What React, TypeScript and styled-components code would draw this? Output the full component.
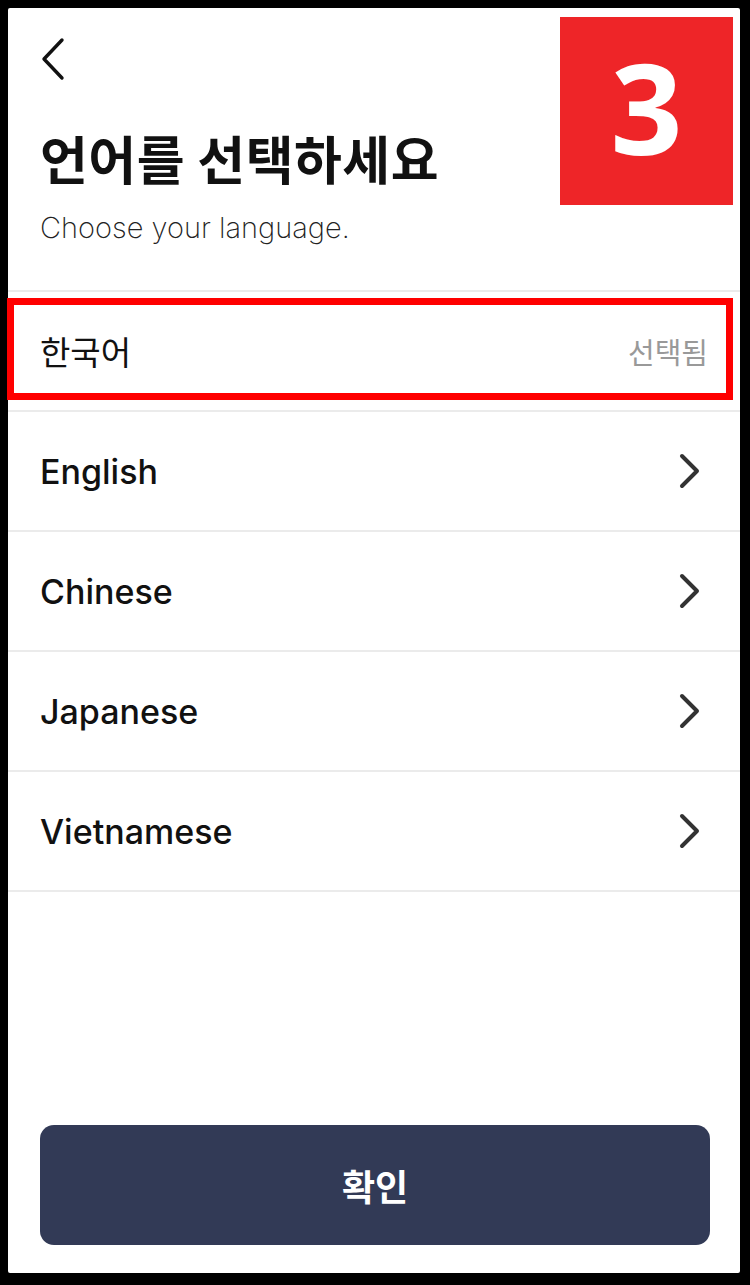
import React from "react";
import styled, { createGlobalStyle } from "styled-components";

const GlobalStyle = createGlobalStyle`
  html, body {
    margin: 0;
    padding: 0;
    background: #000;
  }
  body {
    font-family: "Inter", "Noto Sans CJK KR", sans-serif;
  }
`;

const languages = ["English", "Chinese", "Japanese", "Vietnamese"];

const ChevronLeft = () => (
  <svg width="28" height="44" viewBox="0 0 28 44" fill="none">
    <path
      d="M22 3 L4 22 L22 41"
      stroke="#111"
      strokeWidth="3.4"
      strokeLinecap="round"
      strokeLinejoin="round"
    />
  </svg>
);

const ChevronRight = () => (
  <svg width="24" height="36" viewBox="0 0 24 36" fill="none">
    <path
      d="M4 3 L19 18 L4 33"
      stroke="#333"
      strokeWidth="4"
      strokeLinecap="round"
      strokeLinejoin="round"
    />
  </svg>
);

const App = () => {
  return (
    <>
      <GlobalStyle />
      <Frame>
        <Panel>
          <Badge>3</Badge>
          <Header>
            <BackButton aria-label="back">
              <ChevronLeft />
            </BackButton>
            <Title>언어를 선택하세요</Title>
            <Subtitle>Choose your language.</Subtitle>
          </Header>
          <List>
            <Row>
              <Highlight />
              <Label className="ko">한국어</Label>
              <Selected>선택됨</Selected>
            </Row>
            {languages.map((lang) => (
              <Row key={lang}>
                <Label>{lang}</Label>
                <ChevronRight />
              </Row>
            ))}
          </List>
          <Spacer />
          <Footer>
            <ConfirmButton>확인</ConfirmButton>
          </Footer>
        </Panel>
      </Frame>
    </>
  );
};

export default App;

const Frame = styled.div`
  width: 750px;
  height: 1285px;
  padding: 8px 10px 12px 8px;
  box-sizing: border-box;
  background: #000;
`;

const Panel = styled.div`
  position: relative;
  width: 100%;
  height: 100%;
  background: #fff;
  display: flex;
  flex-direction: column;
  border-radius: 2px;
`;

const Badge = styled.div`
  position: absolute;
  top: 9px;
  left: 552px;
  width: 173px;
  height: 188px;
  background: #ee2528;
  color: #fff;
  font-family: "Open Sans", "Noto Sans", sans-serif;
  font-weight: 700;
  font-size: 126px;
  line-height: 1;
  display: flex;
  justify-content: center;
  padding-top: 26px;
  box-sizing: border-box;
`;

const Header = styled.div`
  height: 282px;
  padding: 28px 32px 0;
  box-sizing: border-box;
`;

const BackButton = styled.button`
  background: none;
  border: none;
  padding: 0;
  margin: 0;
  display: block;
  height: 48px;
  cursor: pointer;
`;

const Title = styled.h1`
  margin: 42px 0 0;
  font-family: "Noto Sans CJK KR", sans-serif;
  font-weight: 700;
  font-size: 52px;
  line-height: 64px;
  letter-spacing: 0.5px;
  color: #111;
`;

const Subtitle = styled.p`
  margin: 20px 0 0;
  font-family: "Inter", sans-serif;
  font-weight: 200;
  font-size: 29px;
  line-height: 36px;
  color: #222;
`;

const List = styled.div`
  display: flex;
  flex-direction: column;
  border-bottom: 2px solid #ebebeb;
`;

const Row = styled.div`
  position: relative;
  height: 118px;
  border-top: 2px solid #ebebeb;
  display: flex;
  align-items: center;
  justify-content: space-between;
  padding: 0 38px 0 32px;
`;

const Highlight = styled.div`
  position: absolute;
  top: 6px;
  left: -1px;
  width: 726px;
  height: 102px;
  border: 7px solid #ff0000;
  box-sizing: border-box;
  pointer-events: none;
`;

const Label = styled.span`
  font-family: "Inter", "Noto Sans CJK KR", sans-serif;
  font-weight: 500;
  font-size: 34px;
  color: #111;

  &.ko {
    font-family: "Noto Sans CJK KR", sans-serif;
    font-weight: 400;
    font-size: 33px;
  }
`;

const Selected = styled.span`
  font-family: "Noto Sans CJK KR", sans-serif;
  font-size: 29px;
  color: #999;
  margin-right: -6px;
`;

const Spacer = styled.div`
  flex: 1;
`;

const Footer = styled.div`
  padding: 0 30px 28px 32px;
`;

const ConfirmButton = styled.button`
  width: 100%;
  height: 120px;
  border: none;
  border-radius: 14px;
  background: #323a56;
  color: #fff;
  font-family: "Noto Sans CJK KR", sans-serif;
  font-weight: 700;
  font-size: 36px;
  cursor: pointer;
`;
